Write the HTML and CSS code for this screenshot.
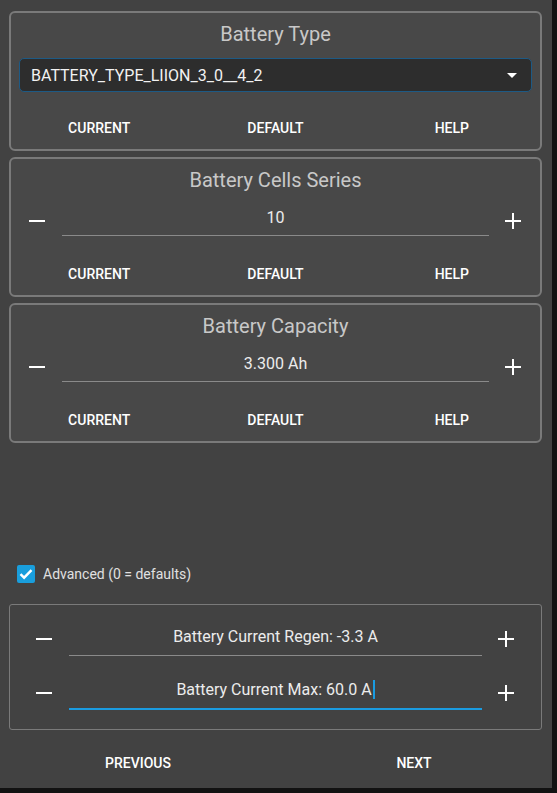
FILE: index.html
```html
<!doctype html>
<html lang="en">
<head>
	<meta charset="utf-8">
	<meta name="viewport" content="width=device-width, initial-scale=1">
	<title>Battery Setup</title>
<link rel="stylesheet" href="styles.css">
</head>
<body>
<div id="app-main">

<div class="card">
	<div class="card-title">Battery Type</div>
	<div class="select">
		<span>BATTERY_TYPE_LIION_3_0__4_2</span>
		<svg class="arrow" width="10" height="5" viewBox="0 0 10 5"><path d="M0 0h10L5 5z" fill="#fff"/></svg>
	</div>
	<div class="actions">
		<button>Current</button><button>Default</button><button>Help</button>
	</div>
</div>

<div class="card">
	<div class="card-title">Battery Cells Series</div>
	<div class="stepper">
		<button class="step"><svg width="18" height="18" viewBox="0 0 18 18"><path d="M1 9h16" stroke="#fff" stroke-width="2"/></svg></button>
		<div class="field">10</div>
		<button class="step plus"><svg width="18" height="18" viewBox="0 0 18 18"><path d="M1 9h16M9 1v16" stroke="#fff" stroke-width="2"/></svg></button>
	</div>
	<div class="actions">
		<button>Current</button><button>Default</button><button>Help</button>
	</div>
</div>

<div class="card">
	<div class="card-title">Battery Capacity</div>
	<div class="stepper">
		<button class="step"><svg width="18" height="18" viewBox="0 0 18 18"><path d="M1 9h16" stroke="#fff" stroke-width="2"/></svg></button>
		<div class="field">3.300 Ah</div>
		<button class="step plus"><svg width="18" height="18" viewBox="0 0 18 18"><path d="M1 9h16M9 1v16" stroke="#fff" stroke-width="2"/></svg></button>
	</div>
	<div class="actions">
		<button>Current</button><button>Default</button><button>Help</button>
	</div>
</div>

<label class="advanced">
	<span class="check"><svg width="18" height="18" viewBox="0 0 18 18"><path d="M3.5 9.2l3.6 3.5 7.4-7.6" stroke="#fff" stroke-width="2.4" fill="none"/></svg></span>
	Advanced (0 = defaults)
</label>

<div class="advanced-box">
	<div class="stepper">
		<button class="step"><svg width="18" height="18" viewBox="0 0 18 18"><path d="M1 9h16" stroke="#fff" stroke-width="2"/></svg></button>
		<div class="field">Battery Current Regen: -3.3 A</div>
		<button class="step plus"><svg width="18" height="18" viewBox="0 0 18 18"><path d="M1 9h16M9 1v16" stroke="#fff" stroke-width="2"/></svg></button>
	</div>
	<div class="stepper">
		<button class="step"><svg width="18" height="18" viewBox="0 0 18 18"><path d="M1 9h16" stroke="#fff" stroke-width="2"/></svg></button>
		<div class="field focused">Battery Current Max: 60.0 A<span class="caret"></span></div>
		<button class="step plus"><svg width="18" height="18" viewBox="0 0 18 18"><path d="M1 9h16M9 1v16" stroke="#fff" stroke-width="2"/></svg></button>
	</div>
</div>

<div class="nav">
	<button>Previous</button><button>Next</button>
</div>

</div>
</body>
</html>
```

FILE: styles.css
```css
body {
	margin: 0;
	background: #121212;
	font-family: Roboto, "Liberation Sans", sans-serif;
	color: #eee;
}

#app-main {
	width: 552px;
	height: 788px;
	box-sizing: border-box;
	padding: 11px 10px 0 9px;
	background: #424242;
	display: flex;
	flex-direction: column;
	gap: 6px;
}

button {
	background: none;
	border: 0;
	padding: 0;
	font-family: inherit;
	color: #fff;
	cursor: pointer;
}

.card {
	height: 140px;
	box-sizing: border-box;
	border: 2px solid #7a7a7a;
	border-radius: 6px;
	background: #484848;
	display: flex;
	flex-direction: column;
}

.card-title {
	margin-top: 9px;
	font-size: 20px;
	line-height: 24px;
	text-align: center;
	color: #c8c8c8;
}

.select {
	margin: 12px 8px 0;
	height: 34px;
	box-sizing: border-box;
	border: 1px solid #1d5a85;
	border-radius: 5px;
	background: #2d2d2d;
	display: flex;
	align-items: center;
	justify-content: space-between;
	padding: 0 14px 0 11px;
	font-size: 16px;
	color: #f2f2f2;
}

.actions {
	margin-top: auto;
	height: 32px;
	padding-bottom: 5px;
	display: grid;
	grid-template-columns: 1fr 1fr 1fr;
	align-items: center;
}

.actions button, .nav button {
	font-size: 14px;
	font-weight: 500;
	text-transform: uppercase;
	text-align: center;
}

.stepper {
	display: grid;
	grid-template-columns: 51px 1fr 51px;
	align-items: center;
	margin-top: 8px;
}

.step {
	display: flex;
	justify-content: center;
	padding-top: 5px;
}

.step.plus {
	padding-right: 3px;
}

.field {
	height: 36px;
	box-sizing: border-box;
	border-bottom: 1px solid #8a8a8a;
	display: flex;
	align-items: center;
	justify-content: center;
	font-size: 16px;
	color: #ececec;
}

.field.focused {
	border-bottom: 2px solid #1a9be0;
}

.caret {
	display: inline-block;
	width: 2px;
	height: 19px;
	margin-left: 1px;
	background: #1a9be0;
}

.advanced {
	margin-top: auto;
	display: flex;
	align-items: center;
	gap: 8px;
	padding-left: 8px;
	font-size: 14px;
	color: #e0e0e0;
}

.check {
	width: 18px;
	height: 18px;
	border-radius: 2px;
	background: #199edc;
	display: flex;
}

.advanced-box {
	margin-top: 15px;
	border: 1px solid #7a7a7a;
	border-radius: 3px;
	padding: 4px 8px 19px;
	display: flex;
	flex-direction: column;
	gap: 7px;
}

.advanced-box .field {
	height: 39px;
}

.nav {
	margin: 7px -10px 5px -9px;
	height: 40px;
	display: grid;
	grid-template-columns: 1fr 1fr;
	align-items: center;
}
```
